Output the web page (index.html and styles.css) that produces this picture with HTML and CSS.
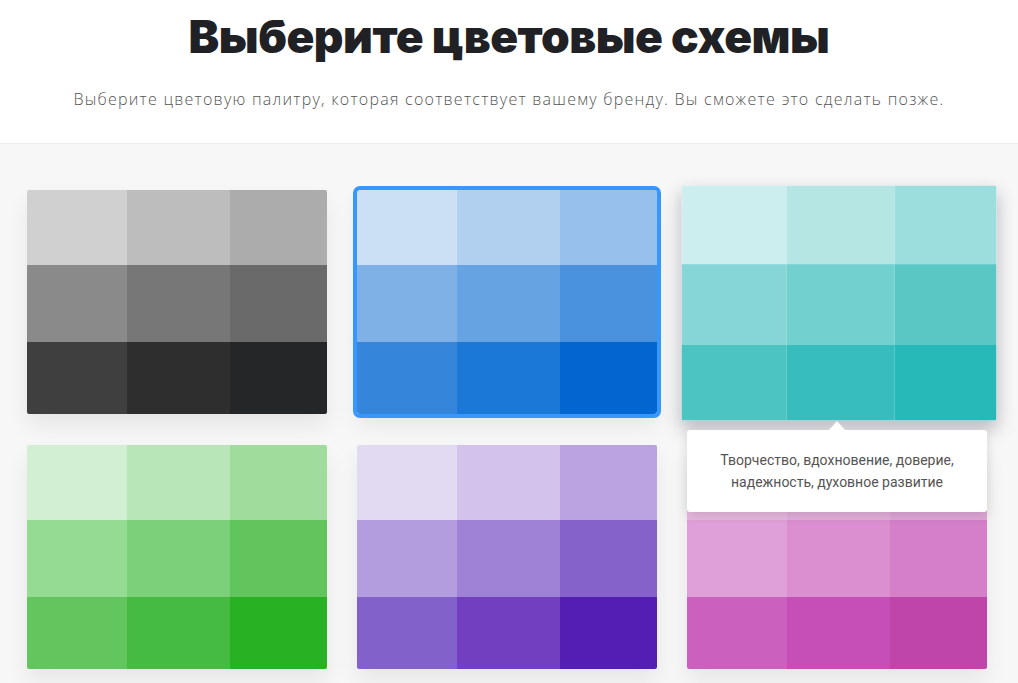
FILE: index.html
```html
<!DOCTYPE html>
<html lang="ru">
<head>
  <meta charset="UTF-8">
  <meta name="viewport" content="width=device-width, initial-scale=1.0">
  <title>Выберите цветовые схемы</title>
  <link rel="stylesheet" href="styles.css">
</head>
<body>

  <header class="intro">
    <h1 class="intro-title">Выберите цветовые схемы</h1>
    <p class="intro-lead">Выберите цветовую палитру, которая соответствует вашему бренду. Вы сможете это сделать позже.</p>
  </header>

  <main class="schemes">
    <ul class="scheme-grid">
      <!-- 1. серый -->
      <li class="scheme-item">
        <div class="scheme scheme--gray">
          <span></span><span></span><span></span>
          <span></span><span></span><span></span>
          <span></span><span></span><span></span>
        </div>
      </li>

      <!-- 2. синий (выбран) -->
      <li class="scheme-item">
        <div class="scheme scheme--blue is-selected">
          <span></span><span></span><span></span>
          <span></span><span></span><span></span>
          <span></span><span></span><span></span>
        </div>
      </li>

      <!-- 3. бирюзовый (наведение + подсказка) -->
      <li class="scheme-item">
        <div class="scheme scheme--teal is-hover">
          <span></span><span></span><span></span>
          <span></span><span></span><span></span>
          <span></span><span></span><span></span>
        </div>
        <div class="scheme-tip">Творчество, вдохновение, доверие,<br>надежность, духовное развитие</div>
      </li>

      <!-- 4. зелёный -->
      <li class="scheme-item">
        <div class="scheme scheme--green">
          <span></span><span></span><span></span>
          <span></span><span></span><span></span>
          <span></span><span></span><span></span>
        </div>
      </li>

      <!-- 5. фиолетовый -->
      <li class="scheme-item">
        <div class="scheme scheme--purple">
          <span></span><span></span><span></span>
          <span></span><span></span><span></span>
          <span></span><span></span><span></span>
        </div>
      </li>

      <!-- 6. розовый -->
      <li class="scheme-item">
        <div class="scheme scheme--pink">
          <span></span><span></span><span></span>
          <span></span><span></span><span></span>
          <span></span><span></span><span></span>
        </div>
      </li>
    </ul>
  </main>

</body>
</html>
```

FILE: styles.css
```css
html, body {
  margin: 0;
  padding: 0;
}

body {
  background: #f7f7f7;
  font-family: Roboto, "Liberation Sans", sans-serif;
  color: #555;
}

.intro {
  background: #fff;
  border-bottom: 1px solid #ececec;
  text-align: center;
  padding: 8px 0 0;
  height: 135px;
}

.intro-title {
  margin: 0;
  font-family: Inter, "Noto Sans", sans-serif;
  font-weight: 900;
  font-size: 46px;
  line-height: 56px;
  letter-spacing: -0.5px;
  color: #1f2124;
}

.intro-lead {
  margin: 25px 0 0;
  font-family: "Open Sans", Roboto, sans-serif;
  font-size: 16px;
  font-weight: 300;
  line-height: 20px;
  letter-spacing: 1.25px;
  color: #555;
}

.schemes {
  padding: 46px 31px 20px 27px;
}

.scheme-grid {
  list-style: none;
  margin: 0;
  padding: 0;
  display: grid;
  grid-template-columns: repeat(3, 300px);
  column-gap: 30px;
  row-gap: 31px;
}

.scheme-item {
  position: relative;
}

.scheme {
  display: grid;
  grid-template-columns: 100px 103px 97px;
  grid-template-rows: 75px 77px 72px;
  width: 300px;
  height: 224px;
  border-radius: 2px;
  overflow: hidden;
  box-shadow: 0 12px 22px rgba(0, 0, 0, 0.07);
}

.scheme.is-selected {
  outline: 4px solid #3797ff;
  border-radius: 3px;
}

.scheme.is-hover {
  position: relative;
  z-index: 1;
  transform: translate(2px, 1px) scale(1.05);
  box-shadow: 0 8px 16px rgba(40, 40, 70, 0.3);
}

/* подсказка под карточкой */
.scheme-tip {
  position: absolute;
  top: 240px;
  left: 0;
  z-index: 2;
  width: 300px;
  box-sizing: border-box;
  padding: 19px 10px;
  background: #fff;
  border-radius: 3px;
  box-shadow: 0 3px 12px rgba(0, 0, 0, 0.12);
  font-size: 14px;
  line-height: 22px;
  text-align: center;
  color: #555;
}

.scheme-tip::before {
  content: "";
  position: absolute;
  top: -9px;
  left: 142px;
  border-left: 8px solid transparent;
  border-right: 8px solid transparent;
  border-bottom: 9px solid #fff;
}

/* палитры */
.scheme--gray span:nth-child(1) { background: #d0d0d0; }
.scheme--gray span:nth-child(2) { background: #bdbdbd; }
.scheme--gray span:nth-child(3) { background: #acacac; }
.scheme--gray span:nth-child(4) { background: #8a8a8a; }
.scheme--gray span:nth-child(5) { background: #777; }
.scheme--gray span:nth-child(6) { background: #6a6a6a; }
.scheme--gray span:nth-child(7) { background: #3f3f3f; }
.scheme--gray span:nth-child(8) { background: #2e2e2e; }
.scheme--gray span:nth-child(9) { background: #252627; }

.scheme--blue span:nth-child(1) { background: #cce0f5; }
.scheme--blue span:nth-child(2) { background: #b1d0f0; }
.scheme--blue span:nth-child(3) { background: #97c1ec; }
.scheme--blue span:nth-child(4) { background: #7fb1e7; }
.scheme--blue span:nth-child(5) { background: #66a3e2; }
.scheme--blue span:nth-child(6) { background: #4a92de; }
.scheme--blue span:nth-child(7) { background: #3586da; }
.scheme--blue span:nth-child(8) { background: #1b78d6; }
.scheme--blue span:nth-child(9) { background: #0266d1; }

.scheme--teal span:nth-child(1) { background: #cdeeee; }
.scheme--teal span:nth-child(2) { background: #b5e6e4; }
.scheme--teal span:nth-child(3) { background: #9cdedd; }
.scheme--teal span:nth-child(4) { background: #86d6d5; }
.scheme--teal span:nth-child(5) { background: #72d0cf; }
.scheme--teal span:nth-child(6) { background: #5ac7c5; }
.scheme--teal span:nth-child(7) { background: #4bc4c2; }
.scheme--teal span:nth-child(8) { background: #37bebc; }
.scheme--teal span:nth-child(9) { background: #27b9b7; }

.scheme--green span:nth-child(1) { background: #d2efd3; }
.scheme--green span:nth-child(2) { background: #b8e6b8; }
.scheme--green span:nth-child(3) { background: #a0dc9c; }
.scheme--green span:nth-child(4) { background: #96db94; }
.scheme--green span:nth-child(5) { background: #7dd07a; }
.scheme--green span:nth-child(6) { background: #62c45d; }
.scheme--green span:nth-child(7) { background: #62c55e; }
.scheme--green span:nth-child(8) { background: #46bb41; }
.scheme--green span:nth-child(9) { background: #27b123; }

.scheme--purple span:nth-child(1) { background: #e2daf3; }
.scheme--purple span:nth-child(2) { background: #d3c3ec; }
.scheme--purple span:nth-child(3) { background: #baa3e0; }
.scheme--purple span:nth-child(4) { background: #b49ddf; }
.scheme--purple span:nth-child(5) { background: #9f81d6; }
.scheme--purple span:nth-child(6) { background: #8462ca; }
.scheme--purple span:nth-child(7) { background: #8361cb; }
.scheme--purple span:nth-child(8) { background: #713fc0; }
.scheme--purple span:nth-child(9) { background: #541db3; }

.scheme--pink span:nth-child(1) { background: #e6b6de; }
.scheme--pink span:nth-child(2) { background: #e1aed9; }
.scheme--pink span:nth-child(3) { background: #dca6d4; }
.scheme--pink span:nth-child(4) { background: #df9fd8; }
.scheme--pink span:nth-child(5) { background: #db8fd0; }
.scheme--pink span:nth-child(6) { background: #d47fc8; }
.scheme--pink span:nth-child(7) { background: #cb60bf; }
.scheme--pink span:nth-child(8) { background: #c54fb6; }
.scheme--pink span:nth-child(9) { background: #c045ab; }
```
